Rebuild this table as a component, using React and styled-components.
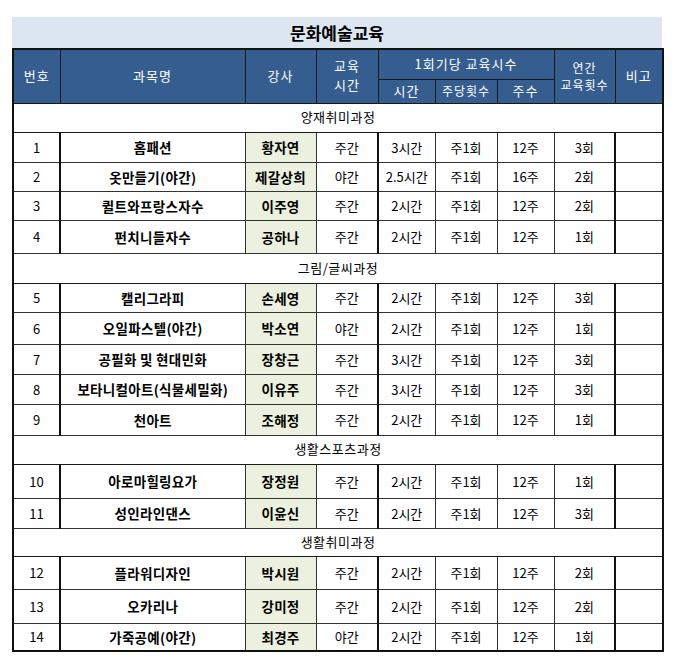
import React from 'react';
import styled, { createGlobalStyle } from 'styled-components';

const GlobalStyle = createGlobalStyle`
  body {
    margin: 0;
    background: #fff;
    font-family: "Noto Sans CJK KR", "Noto Sans", sans-serif;
  }
`;

const Page = styled.div`
  padding: 17px 0 0 12px;
`;

const Sheet = styled.div`
  width: 650px;
`;

const Title = styled.div`
  height: 31px;
  background: #dce6f1;
  display: flex;
  align-items: center;
  justify-content: center;
  font-size: 17px;
  font-weight: 700;
  color: #000;
`;

const Table = styled.table`
  width: 650px;
  border-collapse: collapse;
  table-layout: fixed;
  border: 2px solid #111;
  font-size: 13px;
  color: #000;
`;

const HeadCell = styled.th`
  background: #355d8f;
  color: #fff;
  font-weight: 400;
  font-size: ${p => (p.$small ? '12px' : '13px')};
  line-height: 1.45;
  letter-spacing: 1px;
  border: 1.5px solid #1a1a1a;
  padding: 0;
  text-align: center;
  vertical-align: middle;
`;

const Row = styled.tr`
  height: ${p => p.$h}px;
`;

const Section = styled.td`
  text-align: center;
  border: 1.5px solid #1a1a1a;
  padding: 0 0 2px;
  letter-spacing: 0.5px;
`;

const Cell = styled.td`
  text-align: center;
  border: 1px solid #333;
  border-left: ${p => (p.$thick ? '2px solid #111' : '1px solid #333')};
  background: ${p => (p.$green ? '#ebf1de' : '#fff')};
  font-weight: ${p => (p.$bold ? 700 : 400)};
  font-size: ${p => (p.$bold ? '13.5px' : '13px')};
  letter-spacing: ${p => (p.$bold ? '0.3px' : '0')};
  padding: 0;
  white-space: nowrap;
`;

const widths = [47, 185, 71, 62, 57, 62, 57, 61, 48];

const groups = [
  {
    name: '양재취미과정',
    h: 29,
    rows: [
      [1, '홈패션', '황자연', '주간', '3시간', '주1회', '12주', '3회', 30],
      [2, '옷만들기(야간)', '제갈상희', '야간', '2.5시간', '주1회', '16주', '2회', 29],
      [3, '퀼트와프랑스자수', '이주영', '주간', '2시간', '주1회', '12주', '2회', 29],
      [4, '펀치니들자수', '공하나', '주간', '2시간', '주1회', '12주', '1회', 33],
    ],
  },
  {
    name: '그림/글씨과정',
    h: 30,
    rows: [
      [5, '캘리그라피', '손세영', '주간', '2시간', '주1회', '12주', '3회', 29],
      [6, '오일파스텔(야간)', '박소연', '야간', '2시간', '주1회', '12주', '1회', 32],
      [7, '공필화 및 현대민화', '장창근', '주간', '3시간', '주1회', '12주', '3회', 30],
      [8, '보타니컬아트(식물세밀화)', '이유주', '주간', '3시간', '주1회', '12주', '3회', 30],
      [9, '천아트', '조해정', '주간', '2시간', '주1회', '12주', '1회', 31],
    ],
  },
  {
    name: '생활스포츠과정',
    h: 29,
    rows: [
      [10, '아로마힐링요가', '장정원', '주간', '2시간', '주1회', '12주', '1회', 34],
      [11, '성인라인댄스', '이윤신', '주간', '2시간', '주1회', '12주', '3회', 30],
    ],
  },
  {
    name: '생활취미과정',
    h: 28,
    rows: [
      [12, '플라워디자인', '박시원', '주간', '2시간', '주1회', '12주', '2회', 33],
      [13, '오카리나', '강미정', '주간', '2시간', '주1회', '12주', '2회', 34],
      [14, '가죽공예(야간)', '최경주', '야간', '2시간', '주1회', '12주', '1회', 28],
    ],
  },
];

export default function App() {
  return (
    <Page>
      <GlobalStyle />
      <Sheet>
        <Title>문화예술교육</Title>
        <Table>
          <colgroup>
            {widths.map((w, i) => (
              <col key={i} style={{ width: w }} />
            ))}
          </colgroup>
          <thead>
            <Row $h={30}>
              <HeadCell rowSpan={2}>번호</HeadCell>
              <HeadCell rowSpan={2}>과목명</HeadCell>
              <HeadCell rowSpan={2}>강사</HeadCell>
              <HeadCell rowSpan={2}>
                교육
                <br />
                시간
              </HeadCell>
              <HeadCell colSpan={3}>1회기당 교육시수</HeadCell>
              <HeadCell rowSpan={2} $small>
                연간
                <br />
                교육횟수
              </HeadCell>
              <HeadCell rowSpan={2}>비고</HeadCell>
            </Row>
            <Row $h={24}>
              <HeadCell>시간</HeadCell>
              <HeadCell $small>주당횟수</HeadCell>
              <HeadCell>주수</HeadCell>
            </Row>
          </thead>
          <tbody>
            {groups.map(g => (
              <React.Fragment key={g.name}>
                <Row $h={g.h}>
                  <Section colSpan={9}>{g.name}</Section>
                </Row>
                {g.rows.map(r => (
                  <Row key={r[0]} $h={r[8]}>
                    <Cell>{r[0]}</Cell>
                    <Cell $thick $bold>{r[1]}</Cell>
                    <Cell $green $bold>{r[2]}</Cell>
                    <Cell>{r[3]}</Cell>
                    <Cell $thick>{r[4]}</Cell>
                    <Cell>{r[5]}</Cell>
                    <Cell>{r[6]}</Cell>
                    <Cell>{r[7]}</Cell>
                    <Cell $thick></Cell>
                  </Row>
                ))}
              </React.Fragment>
            ))}
          </tbody>
        </Table>
      </Sheet>
    </Page>
  );
}
